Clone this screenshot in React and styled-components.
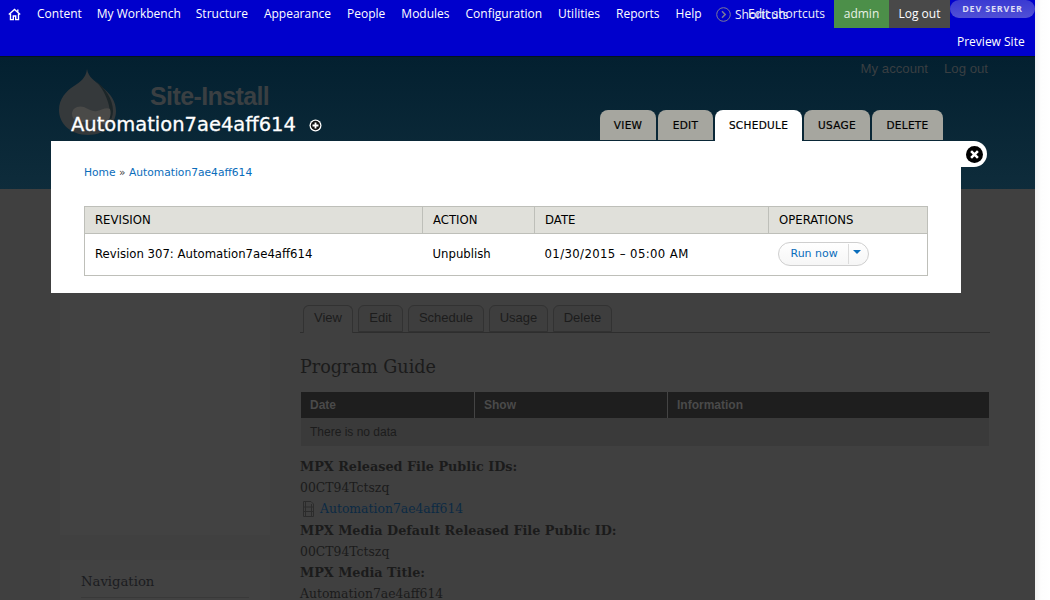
import React from 'react';
import styled, { createGlobalStyle } from 'styled-components';

const Global = createGlobalStyle`
    html, body {
        margin: 0;
        padding: 0;
        height: 600px;
        overflow: hidden;
        background: #fff;
    }
`;

const uiFont = `'DejaVu Sans', Verdana, sans-serif`;
const barFont = `'Open Sans', 'Noto Sans', sans-serif`;
const serifFont = `'DejaVu Serif', Georgia, serif`;

const Page = styled.div`
    position: relative;
    width: 1050px;
    height: 600px;
    overflow: hidden;
    display: flex;
`;

const Main = styled.div`
    position: relative;
    width: 1035px;
    height: 600px;
    flex: none;
    display: flex;
    flex-direction: column;
    background: #404040;
`;

const Scrollbar = styled.div`
    width: 15px;
    background: linear-gradient(to right, #f1f1f1, #fdfdfd 40%, #fff);
`;

/* top toolbar */
const Toolbar = styled.div`
    position: relative;
    height: 56px;
    flex: none;
    display: flex;
    align-items: flex-start;
    background: #0000cc;
    font-family: ${barFont};
    font-size: 12px;
    color: #fff;
`;

const HomeLink = styled.div`
    width: 37px;
    height: 28px;
    padding-left: 8px;
    box-sizing: border-box;
    display: flex;
    align-items: center;
`;

const MenuItem = styled.div`
    height: 28px;
    line-height: 27px;
    margin-right: ${(p) => p.$gap}px;
    white-space: nowrap;
`;

const ShortcutsToggle = styled.div`
    position: absolute;
    left: 716px;
    top: 7px;
    display: flex;
    align-items: center;
    gap: 4px;
    line-height: 14px;
    color: #eeeef8;
`;

const EditShortcuts = styled.div`
    position: absolute;
    left: 748px;
    top: 7px;
    line-height: 14px;
    color: #eeeef8;
`;

const UserArea = styled.div`
    margin-left: auto;
    display: flex;
    align-items: flex-start;
`;

const UserCell = styled.div`
    width: ${(p) => p.$width}px;
    height: 28px;
    line-height: 27px;
    text-align: center;
    background: ${(p) => p.$bg};
    color: ${(p) => p.$color};
`;

const EnvColumn = styled.div`
    width: 85px;
    display: flex;
    flex-direction: column;
`;

const EnvBadge = styled.div`
    height: 18px;
    border-radius: 9px;
    background: linear-gradient(#3a3ad2, #5050d6);
    color: #dcdcf4;
    font-family: ${barFont};
    font-size: 9px;
    font-weight: bold;
    letter-spacing: 0.8px;
    line-height: 18px;
    text-align: center;
`;

const PreviewSite = styled.div`
    margin-top: 15px;
    padding-left: 7px;
    line-height: 17px;
    white-space: nowrap;
`;

/* site header, dimmed by the overlay */
const SiteHeader = styled.div`
    position: relative;
    height: 133px;
    box-sizing: border-box;
    flex: none;
    display: flex;
    justify-content: space-between;
    border-top: 1px solid #03141d;
    background: linear-gradient(#032030, #0e2c3b);
`;

const Branding = styled.div`
    display: flex;
    align-items: flex-start;
    padding: 12px 0 0 59px;
`;

const SiteName = styled.div`
    margin: 12px 0 0 33px;
    font-family: 'Liberation Sans', Arial, sans-serif;
    font-size: 25px;
    font-weight: bold;
    line-height: 30px;
    letter-spacing: -0.6px;
    color: #3a3f42;
`;

const SecondaryLinks = styled.div`
    display: flex;
    gap: 16px;
    padding: 4px 47px 0 0;
    font-family: 'Liberation Sans', Arial, sans-serif;
    font-size: 13.2px;
    line-height: 15px;
    color: #3a3f42;
`;

/* page body, dimmed */
const BodyRow = styled.div`
    flex: 1;
    display: flex;
    min-height: 0;
`;

const Sidebar = styled.div`
    width: 210px;
    margin-left: 60px;
    flex: none;
    display: flex;
    flex-direction: column;
`;

const SidebarBlock = styled.div`
    height: 346px;
    flex: none;
    background: #424242;
`;

const NavBlock = styled.div`
    margin-top: 25px;
    padding: 13px 21px 0;
    height: 60px;
    flex: none;
    background: #424242;
`;

const NavTitle = styled.div`
    font-family: ${serifFont};
    font-size: 13.2px;
    line-height: 18px;
    padding-bottom: 6px;
    border-bottom: 1px solid #393939;
    color: #1b1c20;
`;

const Content = styled.div`
    margin-left: 30px;
    width: 690px;
    padding-top: 116px;
    flex: none;
`;

const DimTabs = styled.div`
    display: flex;
    gap: 5px;
    padding-left: 3px;
    height: 27px;
    border-bottom: 1px solid #2e2e2e;
`;

const DimTab = styled.div`
    width: ${(p) => p.$width}px;
    height: ${(p) => (p.$active ? 28 : 27)}px;
    box-sizing: border-box;
    border: 1px solid #323232;
    border-bottom: ${(p) => (p.$active ? 'none' : '1px solid #323232')};
    border-radius: 6px 6px 0 0;
    background: ${(p) => (p.$active ? '#404040' : '#3e3e3e')};
    font-family: 'Liberation Sans', Arial, sans-serif;
    font-size: 13px;
    line-height: 23px;
    text-align: center;
    color: #1c1c1c;
`;

const PageTitle = styled.h2`
    margin: 22px 0 13px;
    font-family: ${serifFont};
    font-weight: normal;
    font-size: 17.6px;
    line-height: 24px;
    color: #1b1b1b;
`;

const GuideHead = styled.div`
    margin: 0 1px;
    display: grid;
    grid-template-columns: 173px 192px 1fr;
    column-gap: 1px;
    height: 26px;
    background: #1e1e1e;
`;

const GuideHeadCell = styled.div`
    padding-left: 9px;
    border-right: ${(p) => (p.$last ? 'none' : '1px solid #444')};
    margin-right: ${(p) => (p.$last ? 0 : -1)}px;
    font-family: 'Liberation Sans', Arial, sans-serif;
    font-size: 12px;
    font-weight: bold;
    line-height: 26px;
    color: #4a4a4a;
`;

const GuideRow = styled.div`
    margin: 0 1px 10px;
    height: 28px;
    padding-left: 9px;
    background: #3a3a3a;
    font-family: 'Liberation Sans', Arial, sans-serif;
    font-size: 12px;
    line-height: 28px;
    color: #1c1c1c;
`;

const FieldLabel = styled.div`
    font-family: ${serifFont};
    font-size: 12.8px;
    font-weight: bold;
    line-height: 21.2px;
    color: #1b1b1b;
`;

const FieldValue = styled.div`
    display: flex;
    align-items: center;
    gap: 5px;
    height: 21.2px;
    font-family: ${serifFont};
    font-size: 12.4px;
    line-height: 21.2px;
    color: #1b1b1b;
`;

const FileLink = styled.span`
    color: #0c2a44;
`;

const FileGlyph = styled.svg`
    margin-left: 2px;
    flex: none;
`;

/* overlay window, sits above the dimmed page */
const OverlayLayer = styled.div`
    position: absolute;
    left: 0;
    top: 110px;
    width: 1035px;
`;

const OverlayHead = styled.div`
    height: 31px;
    width: 943px;
    padding-left: 71px;
    box-sizing: border-box;
    display: flex;
    align-items: flex-start;
`;

const OverlayTitle = styled.h1`
    margin: 0;
    display: flex;
    align-items: center;
    gap: 13px;
    font-family: ${uiFont};
    font-size: 19.5px;
    font-weight: normal;
    line-height: 30px;
    color: #fff;
    -webkit-text-stroke: 0.3px #fff;
`;

const OverlayTabs = styled.div`
    margin-left: auto;
    display: flex;
    gap: 2px;
`;

const OverlayTab = styled.div`
    width: ${(p) => p.$width}px;
    height: ${(p) => (p.$active ? 31 : 30)}px;
    border-radius: 8px 8px 0 0;
    background: ${(p) => (p.$active ? '#fff' : '#a6a69f')};
    font-family: ${uiFont};
    font-size: 10.5px;
    line-height: 30px;
    letter-spacing: 0.3px;
    text-align: center;
    color: #000;
    -webkit-text-stroke: 0.2px #000;
`;

const Modal = styled.div`
    position: relative;
    margin-left: 51px;
    width: 910px;
    height: 152px;
    box-sizing: border-box;
    padding: 25px 33px 0;
    background: #fff;
`;

const CloseTab = styled.div`
    position: absolute;
    left: 910px;
    top: 0;
    width: 26px;
    height: 26px;
    border-radius: 0 13px 13px 0;
    background: #fff;
    display: flex;
    align-items: center;
    padding-left: 5px;
    box-sizing: border-box;
`;

const Breadcrumb = styled.div`
    font-family: ${uiFont};
    font-size: 10.7px;
    line-height: 14px;
    color: #0a6dbb;
    margin-bottom: 26px;
`;

const Separator = styled.span`
    color: #444;
`;

const RevisionTable = styled.table`
    width: 843px;
    border-collapse: collapse;
    table-layout: fixed;
    font-family: ${uiFont};
    font-size: 11.7px;
    color: #000;
`;

const HeadCell = styled.th`
    width: ${(p) => p.$width}px;
    height: 27px;
    padding: 0 0 0 10px;
    box-sizing: border-box;
    background: #e0e0da;
    border: 1px solid #bebfb9;
    font-weight: normal;
    text-align: left;
`;

const BodyCell = styled.td`
    height: 42px;
    padding: 0 0 2px 10px;
    box-sizing: border-box;
    border-top: 1px solid #bebfb9;
    border-bottom: 1px solid #bebfb9;
    &:first-child {
        border-left: 1px solid #bebfb9;
    }
    &:last-child {
        border-right: 1px solid #bebfb9;
    }
`;

const DateText = styled.span`
    letter-spacing: 0.38px;
`;

const SplitButton = styled.div`
    width: 91px;
    height: 24px;
    margin-left: -1px;
    box-sizing: border-box;
    display: flex;
    align-items: center;
    border: 1px solid #cfcfcf;
    border-radius: 12px;
    background: linear-gradient(#fff, #f6f6f6);
    font-size: 11px;
    color: #0a6dbb;
`;

const RunNow = styled.div`
    width: 70px;
    height: 20px;
    box-sizing: border-box;
    padding-left: 12px;
    line-height: 20px;
    border-right: 1px solid #dcdcdc;
`;

const Caret = styled.div`
    margin: -3px 0 0 4px;
    border-left: 4px solid transparent;
    border-right: 4px solid transparent;
    border-top: 4px solid #0a6dbb;
`;

const HomeIcon = () => (
    <svg width="13" height="13" viewBox="0 0 13 13" fill="none" stroke="#fff" strokeWidth="1.4">
        <path d="M0.8 6.6 L6.5 1.4 L12.2 6.6" />
        <path d="M2.5 5.6 V11.6 H5.3 V8 H7.7 V11.6 H10.5 V5.6" />
        <path d="M9.8 1.5 V3.8" />
    </svg>
);

const ChevronCircle = () => (
    <svg width="15" height="15" viewBox="0 0 15 15" fill="none" stroke="#7b7b98" strokeWidth="1">
        <circle cx="7.5" cy="7.5" r="6.8" />
        <path d="M6 4.3 L9.2 7.5 L6 10.7" strokeWidth="1.5" />
    </svg>
);

const AddIcon = () => (
    <svg width="13" height="13" viewBox="0 0 13 13">
        <circle cx="6.5" cy="6.5" r="6" fill="#fff" />
        <circle cx="6.5" cy="6.5" r="4.7" fill="#111" />
        <path d="M6.5 3.5 V9.5 M3.5 6.5 H9.5" stroke="#fff" strokeWidth="1.8" />
    </svg>
);

const CloseIcon = () => (
    <svg width="17" height="17" viewBox="0 0 20 20">
        <circle cx="10" cy="10" r="10" fill="#000" />
        <path d="M6 6 L14 14 M14 6 L6 14" stroke="#fff" strokeWidth="3" />
    </svg>
);

const DrupalDrop = () => (
    <svg width="58" height="66" viewBox="0 0 58 66">
        <path
            d="M28 0 C29 8 36 12 43 18 C52 25 57 33 57 42 C57 55 46 66 29 66 C12 66 0 55 0 41 C0 30 7 22 15 17 C21 13 27 9 28 0 Z"
            fill="#35393b"
        />
        <path
            d="M36 11 C46 19 54 30 54 42 C54 47 52 51 50 54 C54 38 46 22 36 11 Z"
            fill="#1c2629"
        />
        <path
            d="M13 45 C13 39 19 36 25 38 C30 40 33 43 38 42 C43 41 47 38 51 40 C53 46 50 52 45 56 C41 51 37 50 31 52 C25 54 13 54 13 45 Z"
            fill="#4a4a48"
        />
    </svg>
);

const FileIcon = () => (
    <FileGlyph width="13" height="16" viewBox="0 0 13 16" fill="none" stroke="#2c2c2c" strokeWidth="1">
        <path d="M1.5 0.5 H9 L11.5 3 V15.5 H1.5 Z" />
        <path d="M3.5 0.5 V15.5 M9.5 3 V15.5 M1.5 6 H11.5 M1.5 10.5 H11.5" />
    </FileGlyph>
);

const menu = [
    ['Content', 15],
    ['My Workbench', 15],
    ['Structure', 16],
    ['Appearance', 16],
    ['People', 16],
    ['Modules', 16],
    ['Configuration', 16],
    ['Utilities', 16],
    ['Reports', 16],
    ['Help', 0],
];

const dimTabs = [
    ['View', 50, true],
    ['Edit', 45],
    ['Schedule', 76],
    ['Usage', 59],
    ['Delete', 59],
];

const overlayTabs = [
    ['VIEW', 56],
    ['EDIT', 55],
    ['SCHEDULE', 87, true],
    ['USAGE', 66],
    ['DELETE', 71],
];

const App = () => (
    <Page>
        <Global />
        <Main>
            <Toolbar>
                <HomeLink>
                    <HomeIcon />
                </HomeLink>
                {menu.map(([label, gap]) => (
                    <MenuItem key={label} $gap={gap}>
                        {label}
                    </MenuItem>
                ))}
                <ShortcutsToggle>
                    <ChevronCircle />
                    Shortcuts
                </ShortcutsToggle>
                <EditShortcuts>Edit shortcuts</EditShortcuts>
                <UserArea>
                    <UserCell $width={55} $bg="#4c8f49" $color="#e8f2e6">
                        admin
                    </UserCell>
                    <UserCell $width={61} $bg="#494949" $color="#fff">
                        Log out
                    </UserCell>
                    <EnvColumn>
                        <EnvBadge>DEV SERVER</EnvBadge>
                        <PreviewSite>Preview Site</PreviewSite>
                    </EnvColumn>
                </UserArea>
            </Toolbar>
            <SiteHeader>
                <Branding>
                    <DrupalDrop />
                    <SiteName>Site-Install</SiteName>
                </Branding>
                <SecondaryLinks>
                    <span>My account</span>
                    <span>Log out</span>
                </SecondaryLinks>
            </SiteHeader>
            <BodyRow>
                <Sidebar>
                    <SidebarBlock />
                    <NavBlock>
                        <NavTitle>Navigation</NavTitle>
                    </NavBlock>
                </Sidebar>
                <Content>
                    <DimTabs>
                        {dimTabs.map(([label, width, active]) => (
                            <DimTab key={label} $width={width} $active={active}>
                                {label}
                            </DimTab>
                        ))}
                    </DimTabs>
                    <PageTitle>Program Guide</PageTitle>
                    <GuideHead>
                        <GuideHeadCell>Date</GuideHeadCell>
                        <GuideHeadCell>Show</GuideHeadCell>
                        <GuideHeadCell $last>Information</GuideHeadCell>
                    </GuideHead>
                    <GuideRow>There is no data</GuideRow>
                    <FieldLabel>MPX Released File Public IDs:</FieldLabel>
                    <FieldValue>00CT94Tctszq</FieldValue>
                    <FieldValue>
                        <FileIcon />
                        <FileLink>Automation7ae4aff614</FileLink>
                    </FieldValue>
                    <FieldLabel>MPX Media Default Released File Public ID:</FieldLabel>
                    <FieldValue>00CT94Tctszq</FieldValue>
                    <FieldLabel>MPX Media Title:</FieldLabel>
                    <FieldValue>Automation7ae4aff614</FieldValue>
                </Content>
            </BodyRow>
            <OverlayLayer>
                <OverlayHead>
                    <OverlayTitle>
                        Automation7ae4aff614
                        <AddIcon />
                    </OverlayTitle>
                    <OverlayTabs>
                        {overlayTabs.map(([label, width, active]) => (
                            <OverlayTab key={label} $width={width} $active={active}>
                                {label}
                            </OverlayTab>
                        ))}
                    </OverlayTabs>
                </OverlayHead>
                <Modal>
                    <CloseTab>
                        <CloseIcon />
                    </CloseTab>
                    <Breadcrumb>
                        Home <Separator>»</Separator> Automation7ae4aff614
                    </Breadcrumb>
                    <RevisionTable>
                        <thead>
                            <tr>
                                <HeadCell $width={338}>REVISION</HeadCell>
                                <HeadCell $width={112}>ACTION</HeadCell>
                                <HeadCell $width={234}>DATE</HeadCell>
                                <HeadCell $width={159}>OPERATIONS</HeadCell>
                            </tr>
                        </thead>
                        <tbody>
                            <tr>
                                <BodyCell>Revision 307: Automation7ae4aff614</BodyCell>
                                <BodyCell>Unpublish</BodyCell>
                                <BodyCell>
                                    <DateText>01/30/2015 – 05:00 AM</DateText>
                                </BodyCell>
                                <BodyCell>
                                    <SplitButton>
                                        <RunNow>Run now</RunNow>
                                        <Caret />
                                    </SplitButton>
                                </BodyCell>
                            </tr>
                        </tbody>
                    </RevisionTable>
                </Modal>
            </OverlayLayer>
        </Main>
        <Scrollbar />
    </Page>
);

export default App;
